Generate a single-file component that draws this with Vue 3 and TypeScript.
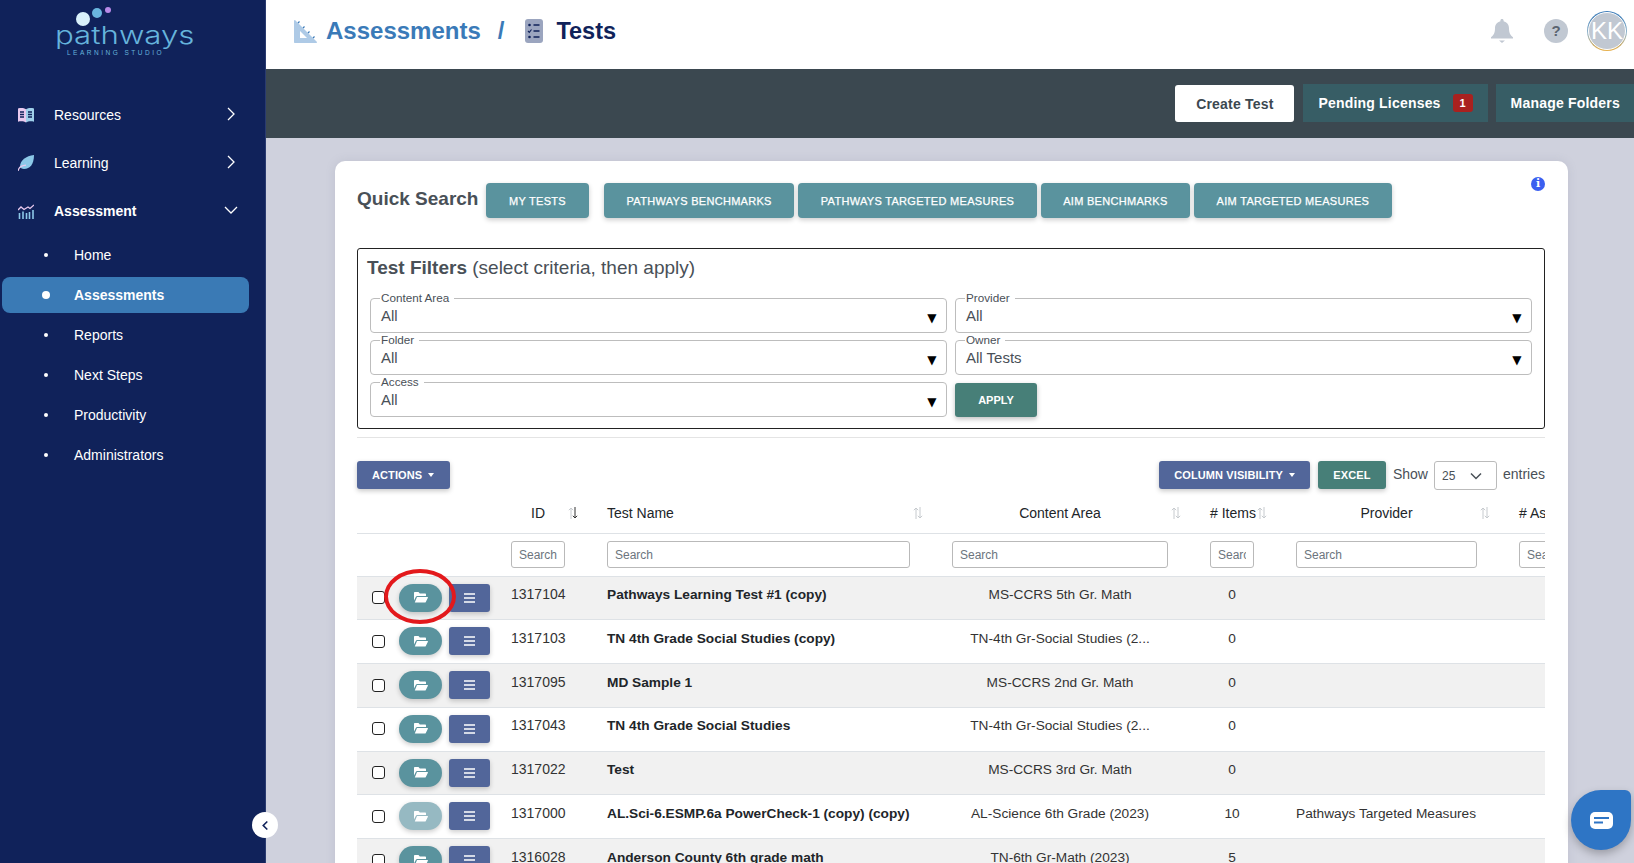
<script setup lang="ts">
interface Row { id: number; name: string; area: string; items: number; provider: string; faded?: boolean }
const rows: Row[] = [
  { id: 1317104, name: 'Pathways Learning Test #1 (copy)', area: 'MS-CCRS 5th Gr. Math', items: 0, provider: '' },
  { id: 1317103, name: 'TN 4th Grade Social Studies (copy)', area: 'TN-4th Gr-Social Studies (2...', items: 0, provider: '' },
  { id: 1317095, name: 'MD Sample 1', area: 'MS-CCRS 2nd Gr. Math', items: 0, provider: '' },
  { id: 1317043, name: 'TN 4th Grade Social Studies', area: 'TN-4th Gr-Social Studies (2...', items: 0, provider: '' },
  { id: 1317022, name: 'Test', area: 'MS-CCRS 3rd Gr. Math', items: 0, provider: '' },
  { id: 1317000, name: 'AL.Sci-6.ESMP.6a PowerCheck-1 (copy) (copy)', area: 'AL-Science 6th Grade (2023)', items: 10, provider: 'Pathways Targeted Measures', faded: true },
  { id: 1316028, name: 'Anderson County 6th grade math', area: 'TN-6th Gr-Math (2023)', items: 5, provider: '' },
]
const subNav = ['Home', 'Assessments', 'Reports', 'Next Steps', 'Productivity', 'Administrators']
const quick = ['PATHWAYS BENCHMARKS', 'PATHWAYS TARGETED MEASURES', 'AIM BENCHMARKS', 'AIM TARGETED MEASURES']
</script>

<template>
  <div class="app">
    <aside class="side">
      <div class="logo">
        <div class="dots"><i class="d1"></i><i class="d2"></i><i class="d3"></i></div>
        <div class="logo-word">pathways</div>
        <div class="logo-sub">LEARNING STUDIO</div>
      </div>
      <nav class="nav">
        <div class="nav-item">
          <svg class="nav-ic" viewBox="0 0 16 16"><path d="M0 1.5c3-.8 6-.5 8 .7V15.500C6 14.300 3 14 0 14.800z" fill="#e9c9ee"/><path d="M16 1.500c-3-.8-6-.5-8 .7V15.500c2-1.200 5-1.500 8-.7z" fill="#9fd0ea"/><path d="M2 5h4M2 7.500h4M2 10h4M10 5h4M10 7.500h4M10 10h4" stroke="#10225a" stroke-width="1.500"/></svg>
          <span>Resources</span>
          <svg class="chev" viewBox="0 0 10 14"><path d="M2 1l6 6-6 6" fill="none" stroke="#fff" stroke-width="1.300"/></svg>
        </div>
        <div class="nav-item">
          <svg class="nav-ic" viewBox="0 0 16 16"><path d="M16 0C16 9 12 14 6 14 4 14 3 13 2 12 2 5 8 1 16 0z" fill="#8cc8e8"/><path d="M0 16c.8-4 3.500-5.500 8-5.800" fill="none" stroke="#e9c9ee" stroke-width="1.300"/></svg>
          <span>Learning</span>
          <svg class="chev" viewBox="0 0 10 14"><path d="M2 1l6 6-6 6" fill="none" stroke="#fff" stroke-width="1.300"/></svg>
        </div>
        <div class="nav-item strong">
          <svg class="nav-ic" viewBox="0 0 16 16"><path d="M0 7l3-3 3 2.500 4-2.500 2 1.500L16 2" fill="none" stroke="#e9c9ee" stroke-width="1.300"/><path d="M1.500 10v6M5 8.500V16M8.500 10v6M11.500 9v7M15 7v9" stroke="#8cc8e8" stroke-width="1.600"/></svg>
          <span>Assessment</span>
          <svg class="chev down" viewBox="0 0 14 10"><path d="M1 2l6 6 6-6" fill="none" stroke="#fff" stroke-width="1.300"/></svg>
        </div>
        <ul class="sub">
          <li v-for="s in subNav" :key="s" :class="{ on: s === 'Assessments' }"><i></i><span>{{ s }}</span></li>
        </ul>
      </nav>
      <button class="collapse" aria-label="Collapse">
        <svg viewBox="0 0 10 12" width="9" height="11"><path d="M7 1.500L2.500 6 7 10.500" fill="none" stroke="#10225a" stroke-width="1.800"/></svg>
      </button>
    </aside>

    <main class="main">
      <header class="top">
        <div class="crumbs">
          <svg class="c-ic1" viewBox="0 0 23 23"><path d="M1 0l22 22c0 .6-.4 1-1 1H1c-.6 0-1-.4-1-1V1c0-.5.5-1 1-1z" fill="#aecae6"/><path d="M6 11l7 7H6z" fill="#fff"/><path d="M4 3l1.500-1.500M9 8l1.500-1.500M14 13l1.500-1.500M19 18l1.500-1.500" stroke="#3a7ab8" stroke-width="1.200"/></svg>
          <span class="c-a">Assessments</span>
          <span class="c-s">/</span>
          <svg class="c-ic2" viewBox="0 0 18 24"><rect width="18" height="24" rx="3" fill="#9ba5bf"/><circle cx="4.500" cy="6" r="1.300" fill="#10225a"/><circle cx="4.500" cy="18" r="1.300" fill="#10225a"/><path d="M3 12l1.300 1.300L6.500 10.500" fill="none" stroke="#10225a" stroke-width="1.100"/><path d="M8.500 6h6M8.500 12h6M8.500 18h6" stroke="#10225a" stroke-width="1.400"/></svg>
          <span class="c-t">Tests</span>
        </div>
        <div class="top-r">
          <svg class="bell" viewBox="0 0 22 24"><path d="M11 0c1 0 1.600.7 1.600 1.600v.6C16 3 18 5.800 18 9.300c0 5 1.500 7 4 9v1.200H0v-1.200c2.500-2 4-4 4-9C4 5.800 6 3 9.400 2.200v-.6C9.400.700 10 0 11 0z" fill="#c1c8d2"/><path d="M8 21.500h6L11 24z" fill="#c1c8d2"/></svg>
          <div class="help">?</div>
          <div class="avatar"><div class="av-in">KK</div></div>
        </div>
      </header>
      <div class="bar">
        <button class="b-create">Create Test</button>
        <button class="b-dark">Pending Licenses<b class="badge">1</b></button>
        <button class="b-dark">Manage Folders</button>
      </div>

      <div class="page">
        <section class="card">
          <div class="info">i</div>
          <div class="quick">
            <h2>Quick Search</h2>
            <button class="q first">MY TESTS</button>
            <div class="q-rest"><button v-for="q in quick" :key="q" class="q">{{ q }}</button></div>
          </div>

          <div class="filters">
            <div class="f-title"><b>Test Filters</b> (select criteria, then apply)</div>
            <div class="f-grid">
              <fieldset class="fld"><legend>Content Area</legend><span>All</span><em>▼</em></fieldset>
              <fieldset class="fld"><legend>Provider</legend><span>All</span><em>▼</em></fieldset>
              <fieldset class="fld"><legend>Folder</legend><span>All</span><em>▼</em></fieldset>
              <fieldset class="fld"><legend>Owner</legend><span>All Tests</span><em>▼</em></fieldset>
              <fieldset class="fld"><legend>Access</legend><span>All</span><em>▼</em></fieldset>
              <div class="apply-cell"><button class="apply">APPLY</button></div>
            </div>
          </div>
          <hr class="rule" />

          <div class="tools">
            <button class="t-btn blue act">ACTIONS<i class="caret"></i></button>
            <div class="tools-r">
              <button class="t-btn blue">COLUMN VISIBILITY<i class="caret"></i></button>
              <button class="t-btn green">EXCEL</button>
              <span class="show">Show</span>
              <div class="len">25
                <svg viewBox="0 0 12 8" width="12" height="8"><path d="M1 1.500l5 5 5-5" fill="none" stroke="#495057" stroke-width="1.500"/></svg>
              </div>
              <span class="show">entries</span>
            </div>
          </div>

          <div class="tbl-wrap">
            <table class="tbl">
              <colgroup>
                <col style="width:144px" /><col style="width:96px" /><col style="width:345px" /><col style="width:258px" /><col style="width:86px" /><col style="width:223px" /><col style="width:120px" />
              </colgroup>
              <thead>
                <tr class="h1">
                  <th></th>
                  <th class="ctr">ID<span class="sort"><svg viewBox="0 0 10 12"><path d="M3 12V1M.8 3.200L3 1l2.200 2.200" fill="none" stroke="#c6cace"/><path d="M7 0v11M4.800 8.800L7 11l2.200-2.200" fill="none" stroke="#333"/></svg></span></th>
                  <th>Test Name<span class="sort"><svg viewBox="0 0 10 12"><path d="M3 12V1M.8 3.200L3 1l2.200 2.200M7 0v11M4.800 8.800L7 11l2.200-2.200" fill="none" stroke="#c6cace"/></svg></span></th>
                  <th class="ctr">Content Area<span class="sort"><svg viewBox="0 0 10 12"><path d="M3 12V1M.8 3.200L3 1l2.200 2.200M7 0v11M4.800 8.800L7 11l2.200-2.200" fill="none" stroke="#c6cace"/></svg></span></th>
                  <th># Items<span class="sort"><svg viewBox="0 0 10 12"><path d="M3 12V1M.8 3.200L3 1l2.200 2.200M7 0v11M4.800 8.800L7 11l2.200-2.200" fill="none" stroke="#c6cace"/></svg></span></th>
                  <th class="ctr">Provider<span class="sort"><svg viewBox="0 0 10 12"><path d="M3 12V1M.8 3.200L3 1l2.200 2.200M7 0v11M4.800 8.800L7 11l2.200-2.200" fill="none" stroke="#c6cace"/></svg></span></th>
                  <th># Assessments</th>
                </tr>
                <tr class="h2">
                  <th></th>
                  <th v-for="n in 6" :key="n"><input placeholder="Search" /></th>
                </tr>
              </thead>
              <tbody>
                <tr v-for="(r, i) in rows" :key="r.id" :class="{ odd: i % 2 === 0 }">
                  <td>
                    <div class="acts">
                      <input type="checkbox" class="chk" />
                      <button class="folder" :class="{ faded: r.faded }" aria-label="Open">
                        <svg viewBox="0 0 14 11" width="14" height="11"><path d="M0 1c0-.6.4-1 1-1h3.500l1.300 1.500H11c.6 0 1 .4 1 1V4H3.200c-.6 0-1 .3-1.300.8L0 8.500z" fill="#fff"/><path d="M3 5h10.500c.4 0 .6.400.4.800L11.800 10c-.2.400-.5.600-.9.600H.8z" fill="#fff"/></svg>
                      </button>
                      <button class="menu" aria-label="Menu">
                        <svg viewBox="0 0 11 10" width="11" height="10"><path d="M0 1h11M0 5h11M0 9h11" stroke="#fff" stroke-width="1.500"/></svg>
                      </button>
                      <span v-if="i === 0" class="ring"></span>
                    </div>
                  </td>
                  <td class="idc">{{ r.id }}</td>
                  <td class="nm">{{ r.name }}</td>
                  <td class="ctr">{{ r.area }}</td>
                  <td class="ctr">{{ r.items }}</td>
                  <td class="pv">{{ r.provider }}</td>
                  <td></td>
                </tr>
              </tbody>
            </table>
          </div>
        </section>
      </div>
    </main>

    <button class="chat" aria-label="Chat">
      <svg viewBox="0 0 23 17" width="23" height="17"><rect width="23" height="17" rx="5" fill="#fff"/><path d="M4 6h15M4 10.500h9" stroke="#2e75c5" stroke-width="1.800"/></svg>
    </button>
  </div>
</template>

<style>
html, body { margin: 0; height: 100%; overflow: hidden; }
</style>

<style scoped>
.app { display: flex; height: 863px; overflow: hidden; font-family: "Liberation Sans", Arial, sans-serif; font-size: 14px; color: #212529; position: relative; }
button { font-family: inherit; border: 0; cursor: pointer; }

.side { width: 266px; flex: none; background: #10225a; color: #fff; position: relative; border-right: 1px solid #2a3b70; box-sizing: border-box; }
.logo { height: 85px; position: relative; text-align: center; color: #66b4dc; }
.dots { position: absolute; inset: 0; }
.dots i { position: absolute; border-radius: 50%; }
.d1 { left: 76px; top: 12px; width: 14px; height: 14px; background: #d9f1fb; }
.d2 { left: 92px; top: 8px; width: 10px; height: 10px; background: #6ab6de; }
.d3 { left: 105px; top: 7px; width: 6px; height: 6px; background: #b98ae8; }
.logo-word { position: absolute; left: 55px; top: 23px; font-family: Inter, sans-serif; font-weight: 300; font-size: 24px; line-height: 26px; transform: scaleX(1.3); transform-origin: left center; }
.logo-sub { position: absolute; left: 67px; top: 49px; font-size: 6.500px; letter-spacing: 2.500px; line-height: 7px; white-space: nowrap; }
.nav { padding-top: 6px; }
.nav-item { height: 48px; display: flex; align-items: center; position: relative; padding-left: 18px; }
.nav-item.strong { font-weight: 700; }
.nav-ic { width: 16px; height: 16px; margin-right: 20px; flex: none; }
.chev { width: 10px; height: 14px; position: absolute; left: 226px; top: 16px; }
.chev.down { width: 14px; height: 10px; left: 224px; top: 18px; }
.sub { list-style: none; margin: -2px 0 0; padding: 0; }
.sub li { height: 36px; margin: 4px 16px 0 2px; border-radius: 8px; display: flex; align-items: center; padding-left: 42px; }
.sub i { width: 4px; height: 4px; background: #fff; border-radius: 50%; margin-right: 26px; margin-left: 0; }
.sub li.on { background: #3a7ab5; font-weight: 700; padding-left: 40px; }
.sub li.on i { width: 8px; height: 8px; margin-right: 24px; }
.collapse { position: absolute; left: 252px; top: 812px; width: 26px; height: 26px; border-radius: 50%; background: #fff; padding: 0; display: flex; align-items: center; justify-content: center; z-index: 3; }

.main { flex: 1; min-width: 0; display: flex; flex-direction: column; background: #cfd1dd; }
.top { height: 69px; flex: none; background: #fff; display: flex; align-items: flex-start; justify-content: space-between; padding: 0 7px 0 28px; }
.crumbs { display: flex; align-items: center; font-size: 24px; font-weight: 700; height: 62px; }
.c-ic1 { width: 23px; height: 23px; margin-right: 9px; }
.c-a { color: #3a7ab8; }
.c-s { color: #3a7ab8; margin: 0 21px 0 17px; }
.c-ic2 { width: 18px; height: 24px; margin-right: 13px; }
.c-t { color: #10225a; font-size: 23.500px; }
.top-r { display: flex; align-items: center; height: 62px; }
.bell { width: 22px; height: 24px; margin-right: 31px; }
.help { width: 24px; height: 24px; border-radius: 50%; background: #c1c8d2; color: #5b6470; font-size: 15px; font-weight: 700; text-align: center; line-height: 24px; margin-right: 19px; }
.avatar { width: 40px; height: 40px; border-radius: 50%; padding: 1px; box-sizing: border-box; background: linear-gradient(#3a7ab8, #8fb2c8 55%, #e8b04a); }
.av-in { width: 100%; height: 100%; border-radius: 50%; background: #c1c8d2; border: 1px solid #fff; box-sizing: border-box; color: #fff; font-size: 24px; line-height: 36px; text-align: center; }

.bar { height: 69px; flex: none; background: #3b4850; display: flex; align-items: flex-start; justify-content: flex-end; padding-top: 15px; margin-right: -1px; box-sizing: border-box; }
.bar button { font-size: 14px; font-weight: 700; letter-spacing: 0.200px; height: 38px; }
.b-create { width: 119px; margin-top: 1px; height: 37px !important; background: #fff; color: #3b4850; border-radius: 3px; margin-right: 9px; }
.b-dark { background: #375d65; color: #fff; padding: 0 15px; margin-right: 8px; display: flex; align-items: center; }
.b-dark:last-child { margin-right: 0; }
.badge { background: #a9211f; color: #fff; font-size: 11px; width: 20px; height: 18px; line-height: 18px; border-radius: 3px; margin-left: 12px; text-align: center; letter-spacing: 0; }

.page { flex: 1; min-height: 0; padding: 23px 66px 0 69px; }
.card { background: #fff; border-radius: 10px 10px 0 0; padding: 22px 23px 0 22px; box-shadow: 0 0 10px rgba(120, 125, 150, 0.18); position: relative; height: 800px; box-sizing: border-box; }
.info { position: absolute; left: 1196px; top: 16px; width: 14px; height: 14px; border-radius: 50%; background: #3b5ff0; color: #fff; font-size: 11px; font-weight: 700; line-height: 14px; text-align: center; font-family: "DejaVu Serif", serif; }
.quick { display: flex; align-items: flex-start; height: 35px; }
.quick h2 { margin: 4px 9px 0 0; font-size: 19px; line-height: 24px; font-weight: 700; color: #495057; width: 120px; white-space: nowrap; }
.q { height: 35px; padding: 0 22.500px; background: #5a939e; color: #fff; font-size: 11px; font-weight: 400; -webkit-text-stroke: 0.25px #fff; border-radius: 4px; box-shadow: 0 2px 5px rgba(0, 0, 0, 0.2); white-space: nowrap; letter-spacing: 0.300px; }
.q.first { margin-right: 15px; width: 103px; padding: 0; }
.q-rest { display: flex; gap: 4px; }

.filters { margin-top: 30px; height: 181px; border: 1px solid #222; border-radius: 3px; box-sizing: border-box; padding: 8px 12px 0 12px; }
.f-title { font-size: 19px; line-height: 22px; color: #495057; margin-left: -3px; }
.f-grid { display: grid; grid-template-columns: 577px 577px; column-gap: 8px; row-gap: 0; margin-top: 13px; }
.fld { margin: 0 0 1px; padding: 0 10px; height: 41px; border: 1px solid #bdbdbd; border-radius: 4px; position: relative; min-width: 0; box-sizing: border-box; }
.fld legend { font-size: 11.700px; line-height: 12px; color: #495057; padding: 0 5px 0 1px; margin-left: -1px; height: 12px; }
.fld span { display: block; font-size: 15px; line-height: 18px; color: #495057; margin-top: 3px; }
.fld em { position: absolute; right: 9.500px; top: 3.500px; font-style: normal; font-size: 12px; line-height: 20px; color: #000; font-family: "DejaVu Sans", sans-serif; }
.apply-cell { height: 41px; padding-top: 7px; box-sizing: border-box; }
.apply { width: 82px; height: 34px; background: #477f78; color: #fff; font-size: 11px; font-weight: 700; border-radius: 3px; box-shadow: 0 2px 5px rgba(0, 0, 0, 0.25); }
.rule { border: 0; border-top: 1px solid #e4e4e4; margin: 8px 0 0; }

.tools { display: flex; justify-content: space-between; align-items: flex-start; margin-top: 23px; height: 28px; }
.tools-r { display: flex; align-items: flex-start; }
.t-btn { height: 28px; padding: 0 15px; color: #fff; font-size: 11px; font-weight: 700; border-radius: 3px; box-shadow: 0 2px 5px rgba(0, 0, 0, 0.22); white-space: nowrap; display: inline-flex; align-items: center; letter-spacing: 0.100px; }
.t-btn.act { padding-right: 16px; }
.t-btn.blue { background: #52669a; }
.t-btn.green { background: #477f78; margin: 0 7px 0 8px; width: 68px; justify-content: center; padding: 0; }
.caret { width: 0; height: 0; border-left: 3.500px solid transparent; border-right: 3.500px solid transparent; border-top: 4px solid #fff; margin-left: 6px; }
.show { font-size: 14px; line-height: 26px; color: #495057; }
.len { width: 63px; height: 29px; border: 1px solid #bbb; border-radius: 3px; box-sizing: border-box; margin: 0 6px 0 6px; display: flex; align-items: center; justify-content: space-between; padding: 0 14px 0 7px; font-size: 12px; color: #495057; }

.tbl-wrap { overflow: hidden; width: 1188px; margin-top: 0; }
.tbl { table-layout: fixed; width: 1272px; border-collapse: collapse; }
.tbl th { font-weight: 400; text-align: left; padding: 0 32px 0 10px; position: relative; white-space: nowrap; color: #212529; }
.tbl th.ctr, .tbl td.ctr { text-align: center; }
.h1 th { height: 44px; border-bottom: 1px solid #dee2e6; padding-top: 5px; box-sizing: border-box; }
.h2 th { height: 43px; border-bottom: 1px solid #dee2e6; box-sizing: border-box; padding-top: 0; }
.sort { position: absolute; right: 19px; top: 18px; width: 10px; height: 12px; }
.sort svg { display: block; width: 10px; height: 12px; }
.h2 input { width: 100%; height: 27px; box-sizing: border-box; border: 1px solid #b9b9b9; border-radius: 3px; padding: 0 7px; font: 12px "Liberation Sans", Arial, sans-serif; display: block; }
.h2 input::placeholder { color: #6c757d; opacity: 1; }
.tbl td { height: 43.800px; box-sizing: border-box; padding: 7.500px 32px 0 10px; vertical-align: top; border-bottom: 1px solid #dee2e6; line-height: 21px; white-space: nowrap; overflow: visible; color: #333; font-size: 13.700px; }
.tbl td.idc { font-size: 14px; }
.tbl td.pv { padding-right: 0; }
.tbl td.nm { font-weight: 700; color: #212529; }
.odd td { background: #f1f1f1; }
.acts { display: flex; align-items: center; position: relative; margin: -0.500px 0 0 5px; height: 28px; }
.chk { appearance: none; width: 13px; height: 13px; margin: 0 14px 0 0; flex: none; background: #fff; border: 1.300px solid #222; border-radius: 3px; box-sizing: border-box; }
.folder { width: 43px; height: 28px; border-radius: 14px; background: #5a939e; padding: 0; display: flex; align-items: center; justify-content: center; box-shadow: 0 2px 5px rgba(0, 0, 0, 0.2); margin-right: 7px; flex: none; }
.folder.faded { background: #96b9c2; }
.menu { width: 41px; height: 28px; border-radius: 3px; background: #52669a; padding: 0; display: flex; align-items: center; justify-content: center; box-shadow: 0 2px 5px rgba(0, 0, 0, 0.2); flex: none; }
.ring { position: absolute; left: 12px; top: -15px; width: 72px; height: 55px; border: 4px solid #e3191c; border-radius: 50%; box-sizing: border-box; pointer-events: none; }

.chat { position: absolute; left: 1571px; top: 790px; width: 60px; height: 60px; background: #2e75c5; border-radius: 50% 6px 50% 50%; padding: 0; display: flex; align-items: center; justify-content: center; box-shadow: 0 4px 8px rgba(0, 0, 0, 0.25); }
</style>
